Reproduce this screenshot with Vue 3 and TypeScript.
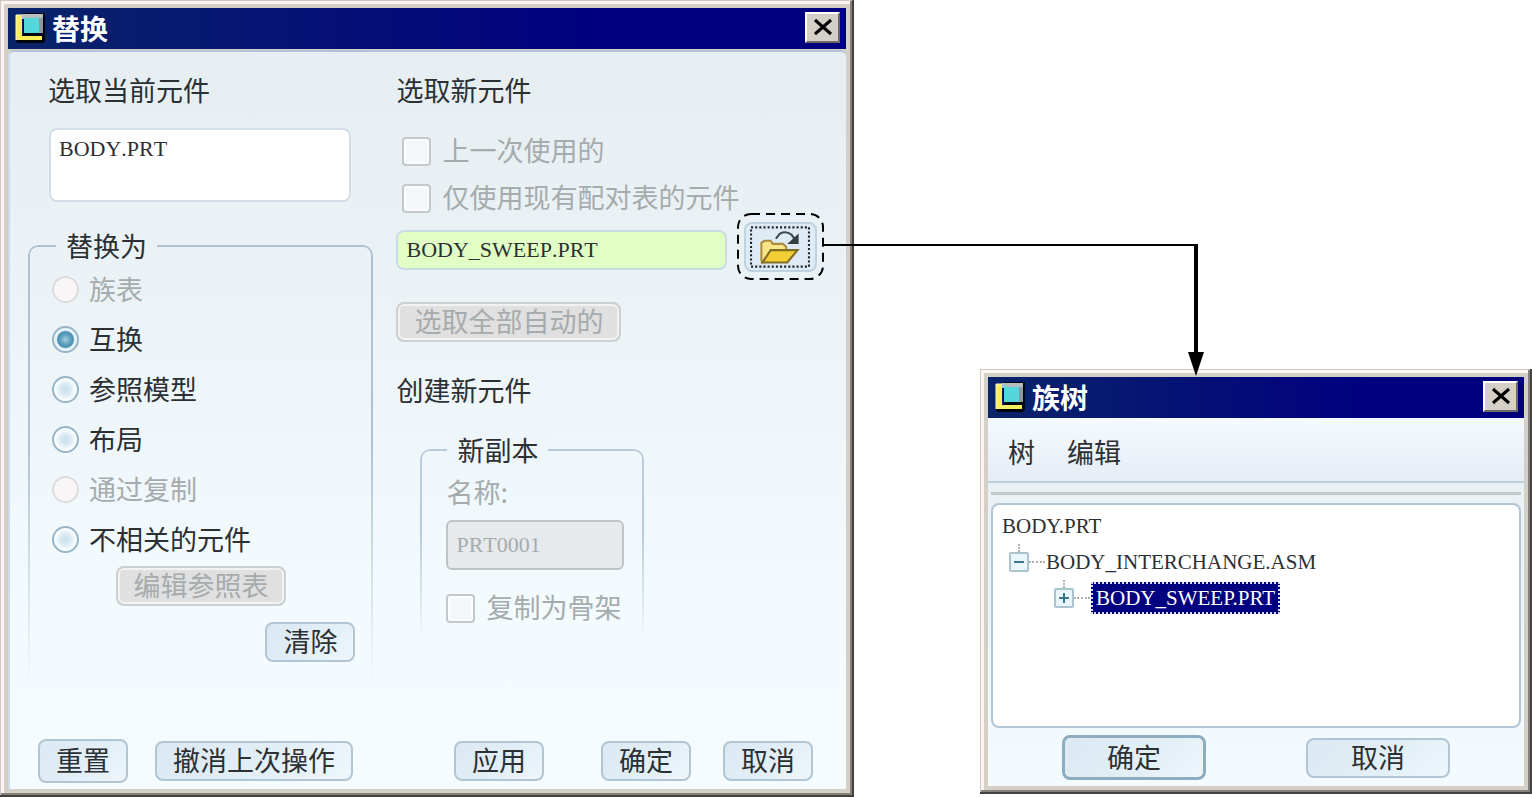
<script setup lang="ts">
import { ref } from 'vue'

interface ReplaceMode {
  id: string
  label: string
  disabled: boolean
}

const modes: ReplaceMode[] = [
  { id: 'family', label: '族表', disabled: true },
  { id: 'interchange', label: '互换', disabled: false },
  { id: 'reference', label: '参照模型', disabled: false },
  { id: 'layout', label: '布局', disabled: false },
  { id: 'copy', label: '通过复制', disabled: true },
  { id: 'unrelated', label: '不相关的元件', disabled: false },
]

const selectedMode = ref('interchange')
const currentComponent = ref('BODY.PRT')
const newComponent = ref('BODY_SWEEP.PRT')
const copyName = ref('PRT0001')
</script>

<template>
  <main class="page">
    <section class="dialog" aria-labelledby="replace-title">
      <header class="titlebar">
        <svg class="app-icon" viewBox="0 0 30 30" aria-hidden="true">
          <path d="M8 0H30V28L28 30H2L1 27H8Z" fill="#04060e" />
          <path d="M1 2H7V23H27V27H1Z" fill="#f8ee5c" />
          <path d="M1 27V2H7" fill="none" stroke="#fffbd0" />
          <path d="M7 1H28V6H7Z" fill="#b4bdc0" />
          <path d="M24 5H28V20H24Z" fill="#8f9aa0" />
          <path d="M9 5H24V20H9Z" fill="#55d5dc" />
        </svg>
        <h1 id="replace-title">替换</h1>
        <button class="close" type="button" aria-label="关闭">
          <svg viewBox="0 0 20 18" aria-hidden="true"><path d="M2 2L18 16M18 2L2 16" stroke="#000" stroke-width="3" /></svg>
        </button>
      </header>

      <div class="replace-body">
        <div class="columns">
          <div class="current">
            <label class="heading list-heading" for="current-component">选取当前元件</label>
            <textarea id="current-component" v-model="currentComponent" class="list" readonly></textarea>

            <fieldset class="group mode-group">
              <legend>替换为</legend>
              <label v-for="mode in modes" :key="mode.id" class="radio-row" :class="{ muted: mode.disabled }">
                <input v-model="selectedMode" type="radio" name="mode" :value="mode.id" :disabled="mode.disabled" />
                <span>{{ mode.label }}</span>
              </label>
              <button class="btn edit-table" type="button" disabled>编辑参照表</button>
              <button class="btn clear" type="button">清除</button>
            </fieldset>
          </div>

          <div class="replacement">
            <h2 class="heading">选取新元件</h2>
            <label class="check-row first-check muted"><input type="checkbox" disabled /><span>上一次使用的</span></label>
            <label class="check-row second-check muted"><input type="checkbox" disabled /><span>仅使用现有配对表的元件</span></label>
            <div class="file-row">
              <input v-model="newComponent" class="file-name" type="text" aria-label="新元件" />
              <div class="callout">
                <svg class="callout-frame" aria-hidden="true"><rect x="1" y="1" width="85" height="65" rx="13" /></svg>
                <button class="open" type="button" aria-label="打开">
                  <svg viewBox="0 0 58 40" aria-hidden="true">
                    <rect x="1" y="1" width="56" height="38" fill="none" stroke="#20252b" stroke-width="2" stroke-dasharray="2 2" />
                    <path d="M25 12L29 7Q35 4 40 8L43 12" fill="none" stroke="#3d484c" stroke-width="2" />
                    <path d="M47 7V17H36Z" fill="#333e42" />
                    <path d="M11 33V16L14 14H20L22 17H32L35 20V24H21L12 35Z" fill="#f9e486" stroke="#aa8c42" stroke-width="2" />
                    <path d="M20 23H46L36 35H12Z" fill="#f2cf35" stroke="#806d25" stroke-width="2" />
                  </svg>
                </button>
              </div>
            </div>
            <button class="btn select-auto" type="button" disabled>选取全部自动的</button>

            <h2 class="heading create-heading">创建新元件</h2>
            <fieldset class="group copy-group">
              <legend>新副本</legend>
              <label class="name-label muted" for="copy-name">名称:</label>
              <input id="copy-name" v-model="copyName" class="copy-name" type="text" disabled />
              <label class="check-row muted"><input type="checkbox" disabled /><span>复制为骨架</span></label>
            </fieldset>
          </div>
        </div>

        <footer class="actions">
          <button class="btn reset" type="button">重置</button>
          <button class="btn undo" type="button">撤消上次操作</button>
          <button class="btn apply" type="button">应用</button>
          <button class="btn" type="button">确定</button>
          <button class="btn" type="button">取消</button>
        </footer>
      </div>
    </section>

    <section class="dialog tree-dialog" aria-labelledby="tree-title">
      <header class="titlebar">
        <svg class="app-icon" viewBox="0 0 30 30" aria-hidden="true">
          <path d="M8 0H30V28L28 30H2L1 27H8Z" fill="#04060e" />
          <path d="M1 2H7V23H27V27H1Z" fill="#f8ee5c" />
          <path d="M1 27V2H7" fill="none" stroke="#fffbd0" />
          <path d="M7 1H28V6H7Z" fill="#b4bdc0" />
          <path d="M24 5H28V20H24Z" fill="#8f9aa0" />
          <path d="M9 5H24V20H9Z" fill="#55d5dc" />
        </svg>
        <h1 id="tree-title">族树</h1>
        <button class="close" type="button" aria-label="关闭">
          <svg viewBox="0 0 20 18" aria-hidden="true"><path d="M2 2L18 16M18 2L2 16" stroke="#000" stroke-width="3" /></svg>
        </button>
      </header>
      <nav class="menubar">
        <button type="button">树</button>
        <button type="button">编辑</button>
      </nav>
      <div class="tree-body">
        <ul class="tree" role="tree">
          <li role="treeitem" class="node">BODY.PRT</li>
          <li role="treeitem" class="node level-1">
            <button class="expander" type="button" aria-label="折叠">
              <svg viewBox="0 0 16 16" aria-hidden="true"><path d="M3 8H13" /></svg>
            </button>
            <span class="dots"></span>
            <span>BODY_INTERCHANGE.ASM</span>
          </li>
          <li role="treeitem" class="node level-2" aria-selected="true">
            <button class="expander" type="button" aria-label="展开">
              <svg viewBox="0 0 16 16" aria-hidden="true"><path d="M3 8H13M8 3V13" /></svg>
            </button>
            <span class="dots"></span>
            <span class="selected">BODY_SWEEP.PRT</span>
          </li>
        </ul>
        <footer class="tree-actions">
          <button class="btn default" type="button">确定</button>
          <button class="btn" type="button">取消</button>
        </footer>
      </div>
    </section>

    <svg class="connector" viewBox="0 0 1532 797" preserveAspectRatio="none" aria-hidden="true">
      <path d="M824 245H1197" fill="none" stroke="#000" stroke-width="2" />
      <path d="M1196 244V354" fill="none" stroke="#000" stroke-width="4" />
      <path d="M1188 352H1204L1196 376Z" />
    </svg>
  </main>
</template>

<style>
body {
  margin: 0;
  background: #fff;
}
</style>

<style scoped>
* {
  box-sizing: border-box;
}

.page {
  position: relative;
  display: grid;
  grid-template-columns: 854fr 552fr;
  column-gap: 126px;
  font: 27px/36px "Noto Sans CJK SC", "Liberation Sans", sans-serif;
  font-kerning: none;
  color: #2c3033;
}

button,
input,
textarea {
  margin: 0;
  font: inherit;
  font-kerning: none;
  color: inherit;
}

.dialog {
  padding: 8px;
  background: #d4d0c8;
  box-shadow:
    inset -2px -2px 0 #454340,
    inset 1px 1px 0 #cfc8c2,
    inset -4px -4px 0 #85827c,
    inset 4px 4px 0 #faf4f2;
}

.tree-dialog {
  align-self: end;
  margin-bottom: 3px;
}

.titlebar {
  display: flex;
  align-items: center;
  height: 41px;
  padding: 0 6px 2px 7px;
  background: linear-gradient(90deg, #0a246a, #00007f 70%);
}

.app-icon {
  width: 30px;
  height: 30px;
}

.titlebar h1 {
  flex: 1;
  margin: 0 0 0 7px;
  font-size: 28px;
  font-weight: 700;
  line-height: 36px;
  color: #fff;
}

.close {
  display: grid;
  place-items: center;
  width: 35px;
  height: 31px;
  padding: 0 0 2px;
  border: 2px solid;
  border-color: #fff #6e6b66 #6e6b66 #fff;
  background: #d4d0c8;
}

.close svg {
  width: 20px;
  height: 18px;
}

.replace-body {
  margin-top: 1px;
  padding-bottom: 6px;
  border-top: 2px solid #b4c4d8;
  border-left: 2px solid #ccdcea;
  border-radius: 6px 6px 0 0;
  background: linear-gradient(#e7eef2, #ecf3f7 35%, #f3fbfe 75%, #f4fcff);
}

.columns {
  display: grid;
  grid-template-columns: 386fr 449fr;
}

.current {
  padding: 20px 23px 0 18px;
}

.heading {
  display: block;
  margin: 0;
  font-size: 27px;
  font-weight: 400;
  line-height: 36px;
}

.list-heading {
  margin-left: 20px;
}

.list {
  display: block;
  width: calc(100% - 43px);
  height: 74px;
  margin: 20px 0 0 21px;
  padding: 4px 8px;
  border: 2px solid #d3dde8;
  border-radius: 8px;
  outline: 0;
  background: #fff;
  font: 22px/30px "Liberation Serif", serif;
  font-kerning: none;
  resize: none;
}

.group {
  position: relative;
  min-width: 0;
  margin: 0;
  padding: 0;
  border: 0;
}

.group::before {
  content: "";
  position: absolute;
  inset: -19px 0 0;
  border: 2px solid #afc2d4;
  border-bottom: 0;
  border-radius: 10px 10px 0 0;
  mask-image: linear-gradient(#000 45%, transparent);
  pointer-events: none;
}

.group legend {
  position: relative;
  z-index: 1;
  margin-left: 30px;
  padding: 0 10px;
  background: #ebf2f6;
}

.mode-group {
  display: flex;
  flex-direction: column;
  margin-top: 26px;
  padding: 0 18px 24px 24px;
}

.mode-group legend {
  margin-left: 4px;
}

.radio-row {
  position: relative;
  display: flex;
  align-items: center;
  gap: 10px;
  height: 50px;
}

.radio-row input {
  width: 27px;
  height: 27px;
  border: 2px solid #98b4c6;
  border-radius: 50%;
  appearance: none;
  background: radial-gradient(circle closest-side, #c9dfeb 0, #dcebf4 50%, #f6fbfe 85%);
}

.radio-row input:checked {
  background: radial-gradient(circle closest-side, #a5d0e2 0, #5d9fbe 45%, #4c91b3 68%, #e6f4fb 80%);
}

.radio-row input:disabled {
  border-color: #dcdcdf;
  background: #f8f6f7;
}

.muted {
  color: #a6abad;
}

.btn {
  position: relative;
  min-width: 90px;
  height: 40px;
  padding: 0 12px 2px;
  border: 2px solid #b2c5d4;
  border-radius: 8px;
  background: linear-gradient(135deg, #dde9f2, #e3eff7 60%, #eef6fb);
  line-height: 34px;
  white-space: nowrap;
}

.btn:disabled {
  border-color: #cdcfd1;
  box-shadow: inset 0 0 0 2px #f1f2f2;
  background: #e0e0e0;
  color: #a6abad;
}

.edit-table {
  align-self: flex-start;
  width: 170px;
  margin: 2px 0 0 64px;
}

.clear {
  align-self: flex-end;
  margin-top: 16px;
}

.replacement {
  padding: 20px 22px 0 0;
}

.check-row {
  position: relative;
  display: flex;
  align-items: center;
  gap: 11px;
  height: 30px;
  line-height: 28px;
  white-space: nowrap;
}

.check-row span {
  padding-bottom: 2px;
}

.check-row input {
  flex: none;
  width: 29px;
  height: 29px;
  border: 2px solid #c4c8cb;
  border-radius: 4px;
  appearance: none;
  background: #f3f7fa;
  box-shadow: inset 0 0 0 2px #fcfdfe;
}

.first-check {
  margin: 28px 0 0 6px;
}

.second-check {
  margin: 17px 0 0 6px;
}

.file-row {
  display: flex;
  gap: 10px;
  height: 67px;
}

.file-name {
  flex: 1;
  min-width: 0;
  height: 40px;
  margin-top: 17px;
  padding: 0 8px;
  border: 2px solid #c9dbe4;
  border-radius: 8px;
  outline: 0;
  background: #e1ffc4;
  font: 22px/30px "Liberation Serif", serif;
  font-kerning: none;
}

.callout {
  position: relative;
  display: grid;
  place-items: center;
  width: 87px;
  height: 67px;
}

.callout-frame {
  position: absolute;
  inset: 0;
  width: 87px;
  height: 67px;
}

.callout-frame rect {
  fill: none;
  stroke: #000;
  stroke-width: 2;
  stroke-dasharray: 9 6;
}

.open {
  position: relative;
  display: grid;
  place-items: center;
  width: 73px;
  height: 50px;
  padding: 0;
  border: 2px solid #bfd2df;
  border-radius: 8px;
  background: #deebf4;
}

.open svg {
  width: 60px;
  height: 42px;
}

.select-auto {
  display: block;
  width: 225px;
  margin-top: 22px;
}

.create-heading {
  margin-top: 30px;
}

.copy-group {
  width: 224px;
  margin: 24px 0 0 24px;
  padding: 0 20px 17px 26px;
}

.copy-group::before {
  border-color: #b9cbdc;
}

.copy-group legend {
  margin-left: 1px;
  background: #eff6fa;
}

.name-label {
  display: block;
  margin-top: 6px;
}

.copy-name {
  display: block;
  width: 100%;
  height: 50px;
  margin: 10px 0 23px;
  padding: 0 8px;
  border: 2px solid #c0c4c6;
  border-radius: 6px;
  background: #e6eaec;
  color: #a6abad;
  font: 22px/30px "Liberation Serif", serif;
  font-kerning: none;
}

.actions {
  display: flex;
  align-items: center;
  height: 44px;
  margin-top: 53px;
  padding: 0 33px 0 28px;
}

.reset {
  height: 44px;
  margin-right: 27px;
}

.undo {
  width: 198px;
  margin-right: auto;
}

.apply {
  margin-right: 57px;
}

.apply + .btn {
  margin-right: 32px;
}

.menubar {
  display: flex;
  gap: 32px;
  align-items: center;
  height: 65px;
  padding: 4px 20px 0;
  border-bottom: 2px solid #bfd0dc;
  background: linear-gradient(#f5faff, #e5ecf4);
}

.menubar button {
  padding: 0;
  border: 0;
  background: none;
}

.tree-body {
  padding: 9px 3px 6px 3px;
  background: linear-gradient(#e9f1f5, #f4fbfe);
}

.tree-body::before {
  content: "";
  display: block;
  height: 3px;
  margin-bottom: 8px;
  background: #c5c9ca;
}

.tree {
  height: 225px;
  margin: 0;
  padding: 3px 9px;
  border: 2px solid #b2c5d4;
  border-radius: 8px;
  background: #fff;
  font: 21px/36px "Liberation Serif", serif;
  list-style: none;
}

.node {
  display: flex;
  align-items: center;
  height: 36px;
}

.level-1 {
  padding-left: 7px;
}

.level-2 {
  padding-left: 52px;
}

.expander {
  position: relative;
  width: 20px;
  height: 20px;
  padding: 0;
  border: 2px solid #abc2cf;
  border-radius: 2px;
  background: #e9f6fc;
}

.expander::before {
  content: "";
  position: absolute;
  left: 7px;
  bottom: 18px;
  height: 8px;
  border-left: 2px dotted #b0b0b0;
}

.expander svg {
  display: block;
  width: 16px;
  height: 16px;
  stroke: #397792;
  stroke-width: 2;
}

.dots {
  width: 16px;
  margin-right: 1px;
  border-top: 2px dotted #b0b0b0;
}

.selected {
  padding: 0 3px;
  border: 2px dotted #d7d7ef;
  background: #000080;
  color: #fff;
  line-height: 28px;
}

.tree-actions {
  display: flex;
  align-items: center;
  justify-content: space-between;
  height: 45px;
  margin-top: 7px;
  padding: 0 71px;
}

.tree-actions .btn {
  width: 144px;
}

.tree-actions .default {
  height: 45px;
  border: 3px solid #8fabc0;
}

.connector {
  position: absolute;
  inset: 0;
  width: 100%;
  height: 100%;
  pointer-events: none;
}
</style>
